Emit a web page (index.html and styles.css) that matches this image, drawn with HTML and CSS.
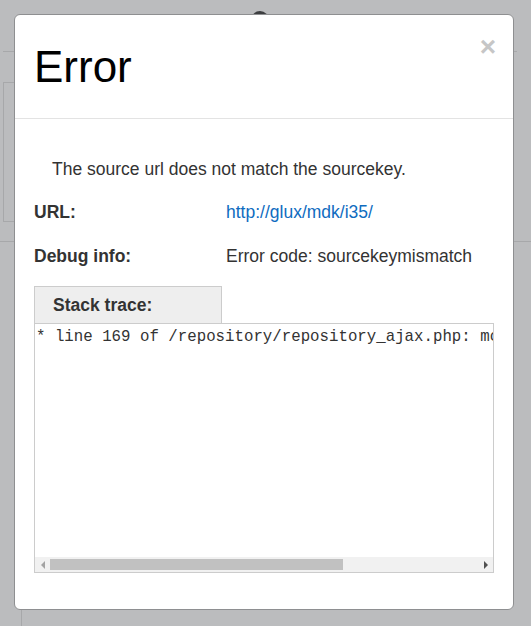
FILE: index.html
```html
<!DOCTYPE html>
<html>
<head>
<meta charset="utf-8">
<title>Error</title>
<link rel="stylesheet" href="styles.css">
</head>
<body>
<div class="page">
  <div class="topbar"><span class="avatar"></span></div>
  <div class="panel"></div>
  <div class="divider"></div>
  <div class="column"></div>
</div>

<div class="modal" role="dialog">
  <div class="modal-header">
    <h3 class="modal-title">Error</h3>
    <button class="close" type="button" aria-label="Close">×</button>
  </div>
  <div class="modal-body">
    <p class="message">The source url does not match the sourcekey.</p>
    <div class="info-row">
      <span class="label">URL:</span>
      <a class="value link" href="#">http://glux/mdk/i35/</a>
    </div>
    <div class="info-row">
      <span class="label">Debug info:</span>
      <span class="value">Error code: sourcekeymismatch</span>
    </div>
    <div class="tab">Stack trace:</div>
    <div class="trace">
      <pre class="trace-content">* line 169 of /repository/repository_ajax.php: moodle_exception thrown</pre>
      <div class="hscroll" aria-hidden="true">
        <span class="arrow arrow-left"></span>
        <div class="track"><div class="thumb" style="width: 293px"></div></div>
        <span class="arrow arrow-right"></span>
      </div>
    </div>
  </div>
</div>
</body>
</html>
```

FILE: styles.css
```css
html, body {
  margin: 0;
  padding: 0;
}
body {
  width: 531px;
  height: 626px;
  overflow: hidden;
  background: #bbbcbe;
  font-family: "Liberation Sans", Arial, sans-serif;
  position: relative;
}

/* dimmed page behind the dialog */
.page {
  position: relative;
  height: 626px;
}
.topbar {
  margin-left: 3px;
  width: 514px;
  height: 51px;
  border-bottom: 1px solid #a7a8aa;
  position: relative;
}
.avatar {
  position: absolute;
  left: 248px;
  top: 11px;
  width: 18px;
  height: 18px;
  border-radius: 50%;
  background: #3d3e40;
}
.panel {
  margin: 30px 0 0 3px;
  width: 300px;
  height: 138px;
  border: 1px solid #a7a8aa;
}
.divider {
  margin-top: 19px;
  height: 0;
  border-top: 1px solid #a7a8aa;
}
.column {
  margin-left: 21px;
  width: 0;
  height: 400px;
  border-left: 1px solid #a7a8aa;
}

/* dialog */
.modal {
  position: absolute;
  left: 14px;
  top: 14px;
  width: 498px;
  height: 594px;
  background: #fff;
  border: 1px solid #8e8f91;
  border-radius: 6px;
  display: flex;
  flex-direction: column;
}
.modal-header {
  position: relative;
  padding: 28px 19px 27px;
  border-bottom: 1px solid #e3e3e3;
}
.modal-title {
  margin: 0;
  font-size: 44px;
  line-height: 48px;
  font-weight: normal;
  color: #000;
}
.close {
  position: absolute;
  right: 17px;
  top: 14px;
  padding: 0;
  border: 0;
  background: none;
  font-family: "Liberation Sans", Arial, sans-serif;
  font-size: 28px;
  font-weight: bold;
  line-height: 36px;
  color: #c6c6c6;
}

.modal-body {
  padding: 37px 19px 0;
  color: #333;
  font-size: 17.5px;
  line-height: 26px;
}
.message {
  margin: 0 0 17px;
  padding-left: 18px;
}
.info-row {
  display: grid;
  grid-template-columns: 192px 1fr;
  margin-bottom: 18px;
}
.info-row + .info-row {
  margin-bottom: 17px;
}
.label {
  font-weight: bold;
}
.link {
  color: #0f6cbf;
  text-decoration: none;
}
.tab {
  width: 168px;
  height: 36px;
  padding-left: 18px;
  box-sizing: content-box;
  background: #eeeeee;
  border: 1px solid #cccccc;
  border-bottom: 0;
  font-weight: bold;
  line-height: 36px;
}
.trace {
  border: 1px solid #cccccc;
  box-sizing: border-box;
  width: 460px;
  height: 250px;
  display: flex;
  flex-direction: column;
}
.trace-content {
  flex: 1;
  margin: 0;
  padding: 1px 1px 0;
  overflow: hidden;
  font-family: "Liberation Mono", "Courier New", monospace;
  font-size: 15.75px;
  line-height: 24px;
  color: #333;
  white-space: pre;
}
.hscroll {
  height: 15px;
  background: #f1f1f1;
  display: flex;
  align-items: center;
}
.arrow {
  width: 15px;
  height: 15px;
  display: flex;
  align-items: center;
  justify-content: center;
  flex: none;
}
.arrow::before {
  content: "";
  width: 0;
  height: 0;
  border-top: 4px solid transparent;
  border-bottom: 4px solid transparent;
}
.arrow-left::before {
  border-right: 4px solid #a3a3a3;
}
.arrow-right::before {
  border-left: 4px solid #505050;
}
.track {
  flex: 1;
  height: 15px;
  display: flex;
  align-items: center;
}
.thumb {
  height: 11px;
  background: #c1c1c1;
}
```
